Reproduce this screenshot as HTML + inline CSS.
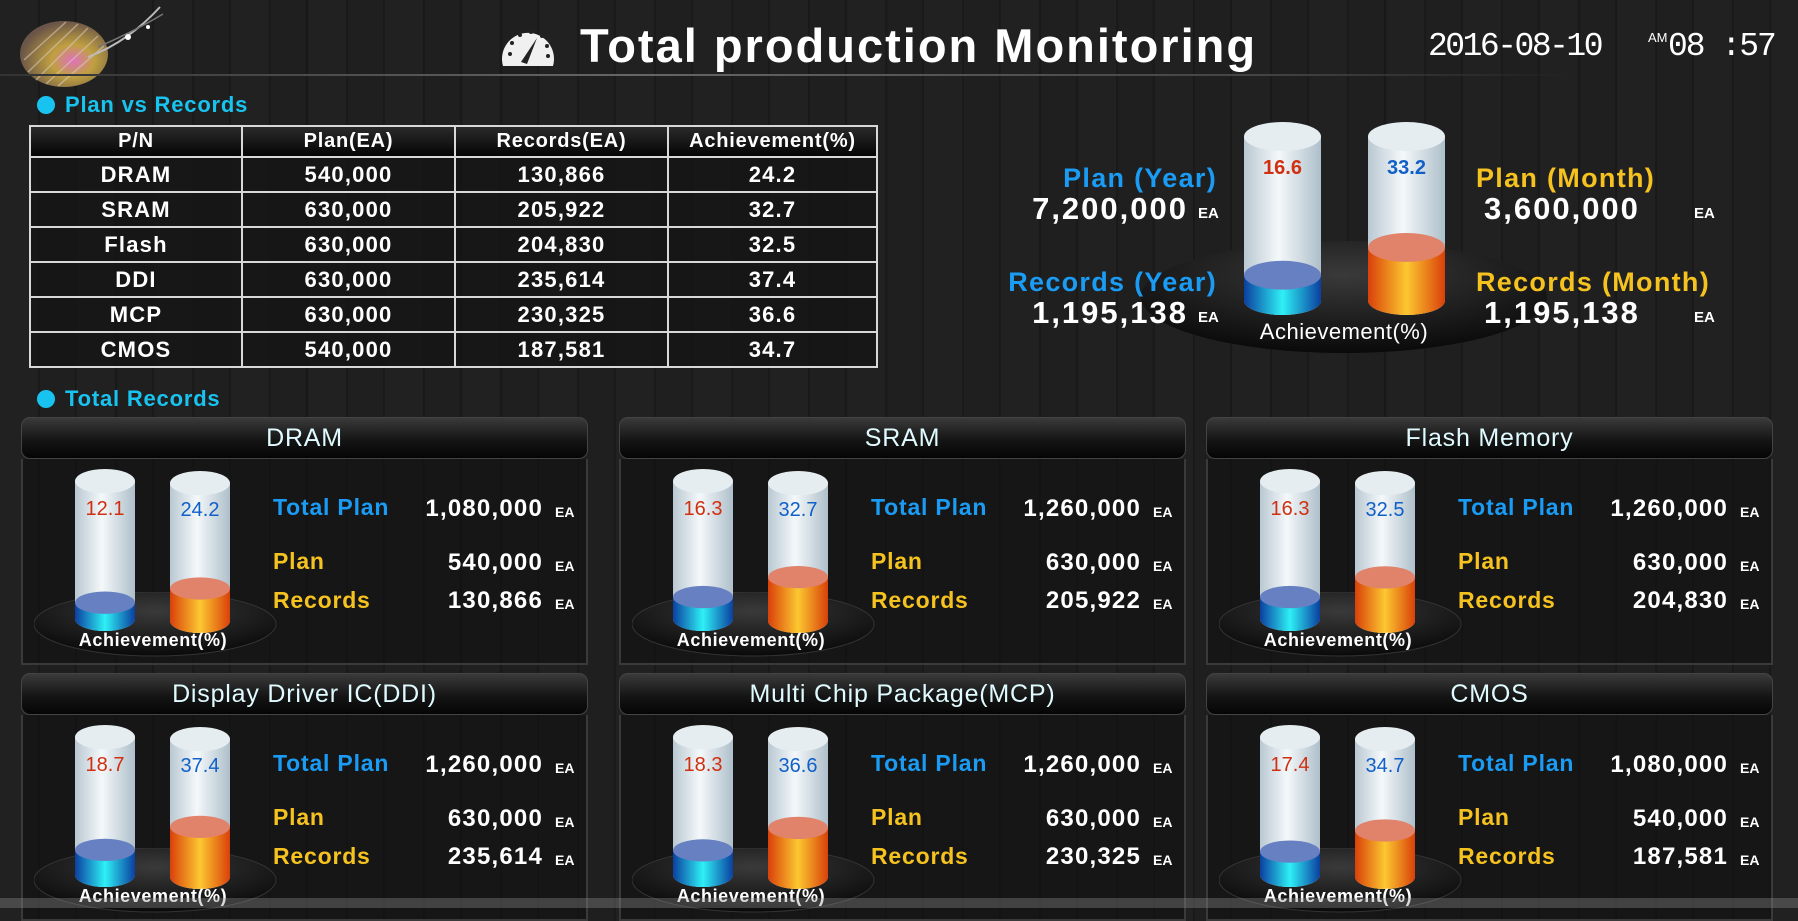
<!DOCTYPE html>
<html><head><meta charset="utf-8">
<style>
*{margin:0;padding:0;box-sizing:border-box}
body{width:1798px;height:908px;overflow:hidden;position:relative;font-family:"Liberation Sans",sans-serif;font-weight:bold;color:#fff;
background:#1c1c1c;
background-image:repeating-linear-gradient(90deg,rgba(255,255,255,0.025) 0 38px,rgba(0,0,0,0.12) 38px 40px,rgba(255,255,255,0.01) 40px 75px,rgba(0,0,0,0.1) 75px 77px);}
.a{position:absolute}
.t{white-space:nowrap}
table{border-collapse:collapse;position:absolute;left:29px;top:125px;width:849px}
td{border:2px solid #d8d8d8;text-align:center;font-size:22px;letter-spacing:1.2px;height:35px;background:rgba(20,20,20,0.75)}
tr.h td{height:31px;font-size:20px;letter-spacing:0.8px;background:linear-gradient(#2a2a2a,#050505)}
.sec{font-size:22px;color:#19c3f0;letter-spacing:0.8px}
.sec:before{content:"";display:inline-block;width:18px;height:18px;border-radius:50%;background:#19c3f0;margin-right:10px;vertical-align:-2px}
.ph{position:absolute;width:567px;height:42px;border-radius:9px;background:linear-gradient(#3a3a3a,#151515 55%,#050505);border:1px solid #444;text-align:center;font-size:25px;letter-spacing:0.8px;font-weight:normal;line-height:40px;color:#e0fbff}
.pb{position:absolute;width:567px;height:206px;border:2px solid #3a3a3a;border-top:none;background:rgba(15,15,15,0.55)}
.lbl{position:absolute;font-size:23px;letter-spacing:0.8px}
.val{position:absolute;font-size:24px;letter-spacing:1.2px;text-align:right;width:160px}
.ea{position:absolute;font-size:14px}
.cv{position:absolute;font-size:20px;font-weight:normal;text-align:center;width:60px}
</style></head><body>
<svg width="0" height="0" style="position:absolute">
<defs>
<linearGradient id="gl" x1="0" x2="1"><stop offset="0" stop-color="#b9c8d2"/><stop offset="0.45" stop-color="#f4f8fa"/><stop offset="1" stop-color="#aebfca"/></linearGradient>
<linearGradient id="bl" x1="0" x2="1"><stop offset="0" stop-color="#0b3fa0"/><stop offset="0.5" stop-color="#2ef0f5"/><stop offset="1" stop-color="#0b3fa0"/></linearGradient>
<linearGradient id="or" x1="0" x2="1"><stop offset="0" stop-color="#d9400a"/><stop offset="0.5" stop-color="#fcc830"/><stop offset="1" stop-color="#d9400a"/></linearGradient>
<radialGradient id="bs" cx="0.5" cy="0.3" r="0.7"><stop offset="0" stop-color="#3a3a3a"/><stop offset="1" stop-color="#0a0a0a"/></radialGradient>
<radialGradient id="wf" cx="0.6" cy="0.6" r="0.6"><stop offset="0" stop-color="#e070c0"/><stop offset="0.4" stop-color="#c0a040"/><stop offset="1" stop-color="#6a5548"/></radialGradient>
</defs></svg>

<!-- logo -->
<svg class="a" style="left:8px;top:2px" width="160" height="95" viewBox="0 0 160 95">
<ellipse cx="56" cy="52" rx="44" ry="33" fill="url(#wf)"/>
<g stroke="#d8c8b8" stroke-width="1.5" opacity="0.6"><line x1="20" y1="70" x2="70" y2="22"/><line x1="28" y1="78" x2="80" y2="26"/><line x1="38" y1="82" x2="90" y2="34"/><line x1="16" y1="58" x2="58" y2="20"/><line x1="50" y1="84" x2="96" y2="44"/></g>
<path d="M80 55 Q120 40 152 5" stroke="#bbb" stroke-width="2" fill="none"/>
<path d="M90 45 Q125 30 155 12" stroke="#777" stroke-width="1.5" fill="none"/>
<circle cx="120" cy="35" r="3" fill="#fff"/><circle cx="140" cy="25" r="2" fill="#fff"/>
</svg>

<!-- title -->
<svg class="a" style="left:499px;top:24px" width="58" height="44" viewBox="0 0 58 44">
<path d="M4 42 A26 26 0 1 1 54 42 Z" fill="#f0f0f0"/>
<g fill="#222"><circle cx="11" cy="30" r="2"/><circle cx="13" cy="19" r="2"/><circle cx="21" cy="11" r="2"/><circle cx="32" cy="8" r="2"/><circle cx="43" cy="12" r="2"/><circle cx="48" cy="22" r="2"/><circle cx="49" cy="32" r="2"/></g>
<path d="M22 38 L38 14 L28 40 Z" fill="#222"/>
</svg>
<div class="a t" style="left:580px;top:18px;font-size:47px;letter-spacing:2px">Total production Monitoring</div>
<div class="a t" style="left:1428px;top:28px;font-size:33px;font-weight:normal;font-family:'Liberation Mono',monospace;letter-spacing:-2.5px">2016-08-10</div>
<div class="a t" style="left:1648px;top:30px;font-size:13px;font-weight:normal">AM</div>
<div class="a t" style="left:1668px;top:28px;font-size:33px;font-weight:normal;font-family:'Liberation Mono',monospace;letter-spacing:-2px">08 :57</div>
<div class="a" style="left:0;top:74px;width:1570px;height:2px;background:linear-gradient(90deg,#333,#666 40%,#444 80%,rgba(60,60,60,0))"></div>

<div class="a t sec" style="left:37px;top:92px">Plan vs Records</div>
<table>
<tr class="h"><td style="width:212px">P/N</td><td style="width:213px">Plan(EA)</td><td style="width:213px">Records(EA)</td><td>Achievement(%)</td></tr>
<tr><td>DRAM</td><td>540,000</td><td>130,866</td><td>24.2</td></tr>
<tr><td>SRAM</td><td>630,000</td><td>205,922</td><td>32.7</td></tr>
<tr><td>Flash</td><td>630,000</td><td>204,830</td><td>32.5</td></tr>
<tr><td>DDI</td><td>630,000</td><td>235,614</td><td>37.4</td></tr>
<tr><td>MCP</td><td>630,000</td><td>230,325</td><td>36.6</td></tr>
<tr><td>CMOS</td><td>540,000</td><td>187,581</td><td>34.7</td></tr>
</table>

<!-- top summary -->
<svg class="a" style="left:1141px;top:241px" width="407" height="113"><ellipse cx="203" cy="56" rx="203" ry="56" fill="url(#bs)"/></svg>
<svg class="a" style="left:1244px;top:122px" width="77" height="193" viewBox="0 0 60 160" preserveAspectRatio="none">
<rect x="0" y="12" width="60" height="136" fill="url(#gl)"/><ellipse cx="30" cy="148" rx="30" ry="12" fill="url(#gl)"/>
<rect x="0" y="127" width="60" height="21" fill="url(#bl)"/><ellipse cx="30" cy="148" rx="30" ry="12" fill="url(#bl)"/><ellipse cx="30" cy="127" rx="30" ry="12" fill="#6680c2"/>
<ellipse cx="30" cy="12" rx="30" ry="12" fill="#e6edf1"/></svg>
<svg class="a" style="left:1368px;top:122px" width="77" height="193" viewBox="0 0 60 160" preserveAspectRatio="none">
<rect x="0" y="12" width="60" height="136" fill="url(#gl)"/><ellipse cx="30" cy="148" rx="30" ry="12" fill="url(#gl)"/>
<rect x="0" y="104" width="60" height="44" fill="url(#or)"/><ellipse cx="30" cy="148" rx="30" ry="12" fill="url(#or)"/><ellipse cx="30" cy="104" rx="30" ry="12" fill="#e0836a"/>
<ellipse cx="30" cy="12" rx="30" ry="12" fill="#e6edf1"/></svg>
<div class="a t" style="left:1244px;top:157px;width:77px;text-align:center;font-size:20px;color:#d03010">16.6</div>
<div class="a t" style="left:1368px;top:157px;width:77px;text-align:center;font-size:20px;color:#1060c8">33.2</div>
<div class="a t" style="left:1234px;top:319px;width:220px;text-align:center;font-size:22px;font-weight:normal;letter-spacing:0.5px">Achievement(%)</div>
<div class="a t" style="left:950px;top:163px;width:267px;text-align:right;font-size:27px;letter-spacing:1.3px;color:#1a9cf5">Plan (Year)</div>
<div class="a t" style="left:950px;top:267px;width:267px;text-align:right;font-size:27px;letter-spacing:1.3px;color:#1a9cf5">Records (Year)</div>
<div class="a t" style="left:950px;top:191px;width:238px;text-align:right;font-size:31px;letter-spacing:2px">7,200,000</div>
<div class="a t" style="left:950px;top:295px;width:238px;text-align:right;font-size:31px;letter-spacing:2px">1,195,138</div>
<div class="a t" style="left:1198px;top:205px;font-size:15px">EA</div>
<div class="a t" style="left:1198px;top:309px;font-size:15px">EA</div>
<div class="a t" style="left:1476px;top:163px;font-size:27px;letter-spacing:1.3px;color:#f5c220">Plan (Month)</div>
<div class="a t" style="left:1476px;top:267px;font-size:27px;letter-spacing:1.3px;color:#f5c220">Records (Month)</div>
<div class="a t" style="left:1484px;top:191px;font-size:31px;letter-spacing:2px">3,600,000</div>
<div class="a t" style="left:1484px;top:295px;font-size:31px;letter-spacing:2px">1,195,138</div>
<div class="a t" style="left:1694px;top:205px;font-size:15px">EA</div>
<div class="a t" style="left:1694px;top:309px;font-size:15px">EA</div>

<div class="a t sec" style="left:37px;top:386px">Total Records</div>

<div id="panels"></div>
<script>
var P=[["DRAM",12.1,24.2,"1,080,000","540,000","130,866"],["SRAM",16.3,32.7,"1,260,000","630,000","205,922"],["Flash Memory",16.3,32.5,"1,260,000","630,000","204,830"],
["Display Driver IC(DDI)",18.7,37.4,"1,260,000","630,000","235,614"],["Multi Chip Package(MCP)",18.3,36.6,"1,260,000","630,000","230,325"],["CMOS",17.4,34.7,"1,080,000","540,000","187,581"]];
var X=[21,619,1206],Y=[417,673],h="";
function cyl(l,t,p,g,c){var L=148-p*1.32;return '<svg class="a" style="left:'+l+'px;top:'+t+'px" width="60" height="162" viewBox="0 0 60 160" preserveAspectRatio="none"><rect x="0" y="12" width="60" height="136" fill="url(#gl)"/><ellipse cx="30" cy="148" rx="30" ry="12" fill="url(#gl)"/><rect x="0" y="'+L+'" width="60" height="'+(148-L)+'" fill="url(#'+g+')"/><ellipse cx="30" cy="148" rx="30" ry="12" fill="url(#'+g+')"/><ellipse cx="30" cy="'+L+'" rx="30" ry="11" fill="'+c+'"/><ellipse cx="30" cy="12" rx="30" ry="12" fill="#e6edf1"/></svg>';}
P.forEach(function(d,i){var x=X[i%3],y=Y[Math.floor(i/3)];
h+='<div class="ph t" style="left:'+x+'px;top:'+y+'px">'+d[0]+'</div>';
h+='<div class="pb" style="left:'+x+'px;top:'+(y+42)+'px"></div>';
h+='<svg class="a" style="left:'+(x+13)+'px;top:'+(y+175)+'px" width="243" height="65"><ellipse cx="121" cy="32" rx="121" ry="32" fill="url(#bs)" stroke="#333"/></svg>';
h+=cyl(x+54,y+52,d[1],"bl","#6680c2")+cyl(x+149,y+54,d[2],"or","#e0836a");
h+='<div class="cv t" style="left:'+(x+54)+'px;top:'+(y+81)+'px;color:#d03010">'+d[1]+'</div>';
h+='<div class="cv t" style="left:'+(x+149)+'px;top:'+(y+82)+'px;color:#1060c8">'+d[2]+'</div>';
h+='<div class="a t" style="left:'+(x+32)+'px;top:'+(y+213)+'px;width:200px;text-align:center;font-size:18px;letter-spacing:0.6px">Achievement(%)</div>';
h+='<div class="lbl t" style="left:'+(x+252)+'px;top:'+(y+77)+'px;color:#1a9cf5">Total Plan</div>';
h+='<div class="lbl t" style="left:'+(x+252)+'px;top:'+(y+131)+'px;color:#f5c220">Plan</div>';
h+='<div class="lbl t" style="left:'+(x+252)+'px;top:'+(y+170)+'px;color:#f5c220">Records</div>';
[[3,78],[4,132],[5,170]].forEach(function(r){h+='<div class="val t" style="left:'+(x+362)+'px;top:'+(y+r[1])+'px">'+d[r[0]]+'</div><div class="ea t" style="left:'+(x+534)+'px;top:'+(y+r[1]+9)+'px">EA</div>';});
});
document.getElementById("panels").innerHTML=h;
</script>
<div class="a" style="left:0;top:898px;width:1798px;height:10px;background:rgba(150,150,150,0.35)"></div>
</body></html>
